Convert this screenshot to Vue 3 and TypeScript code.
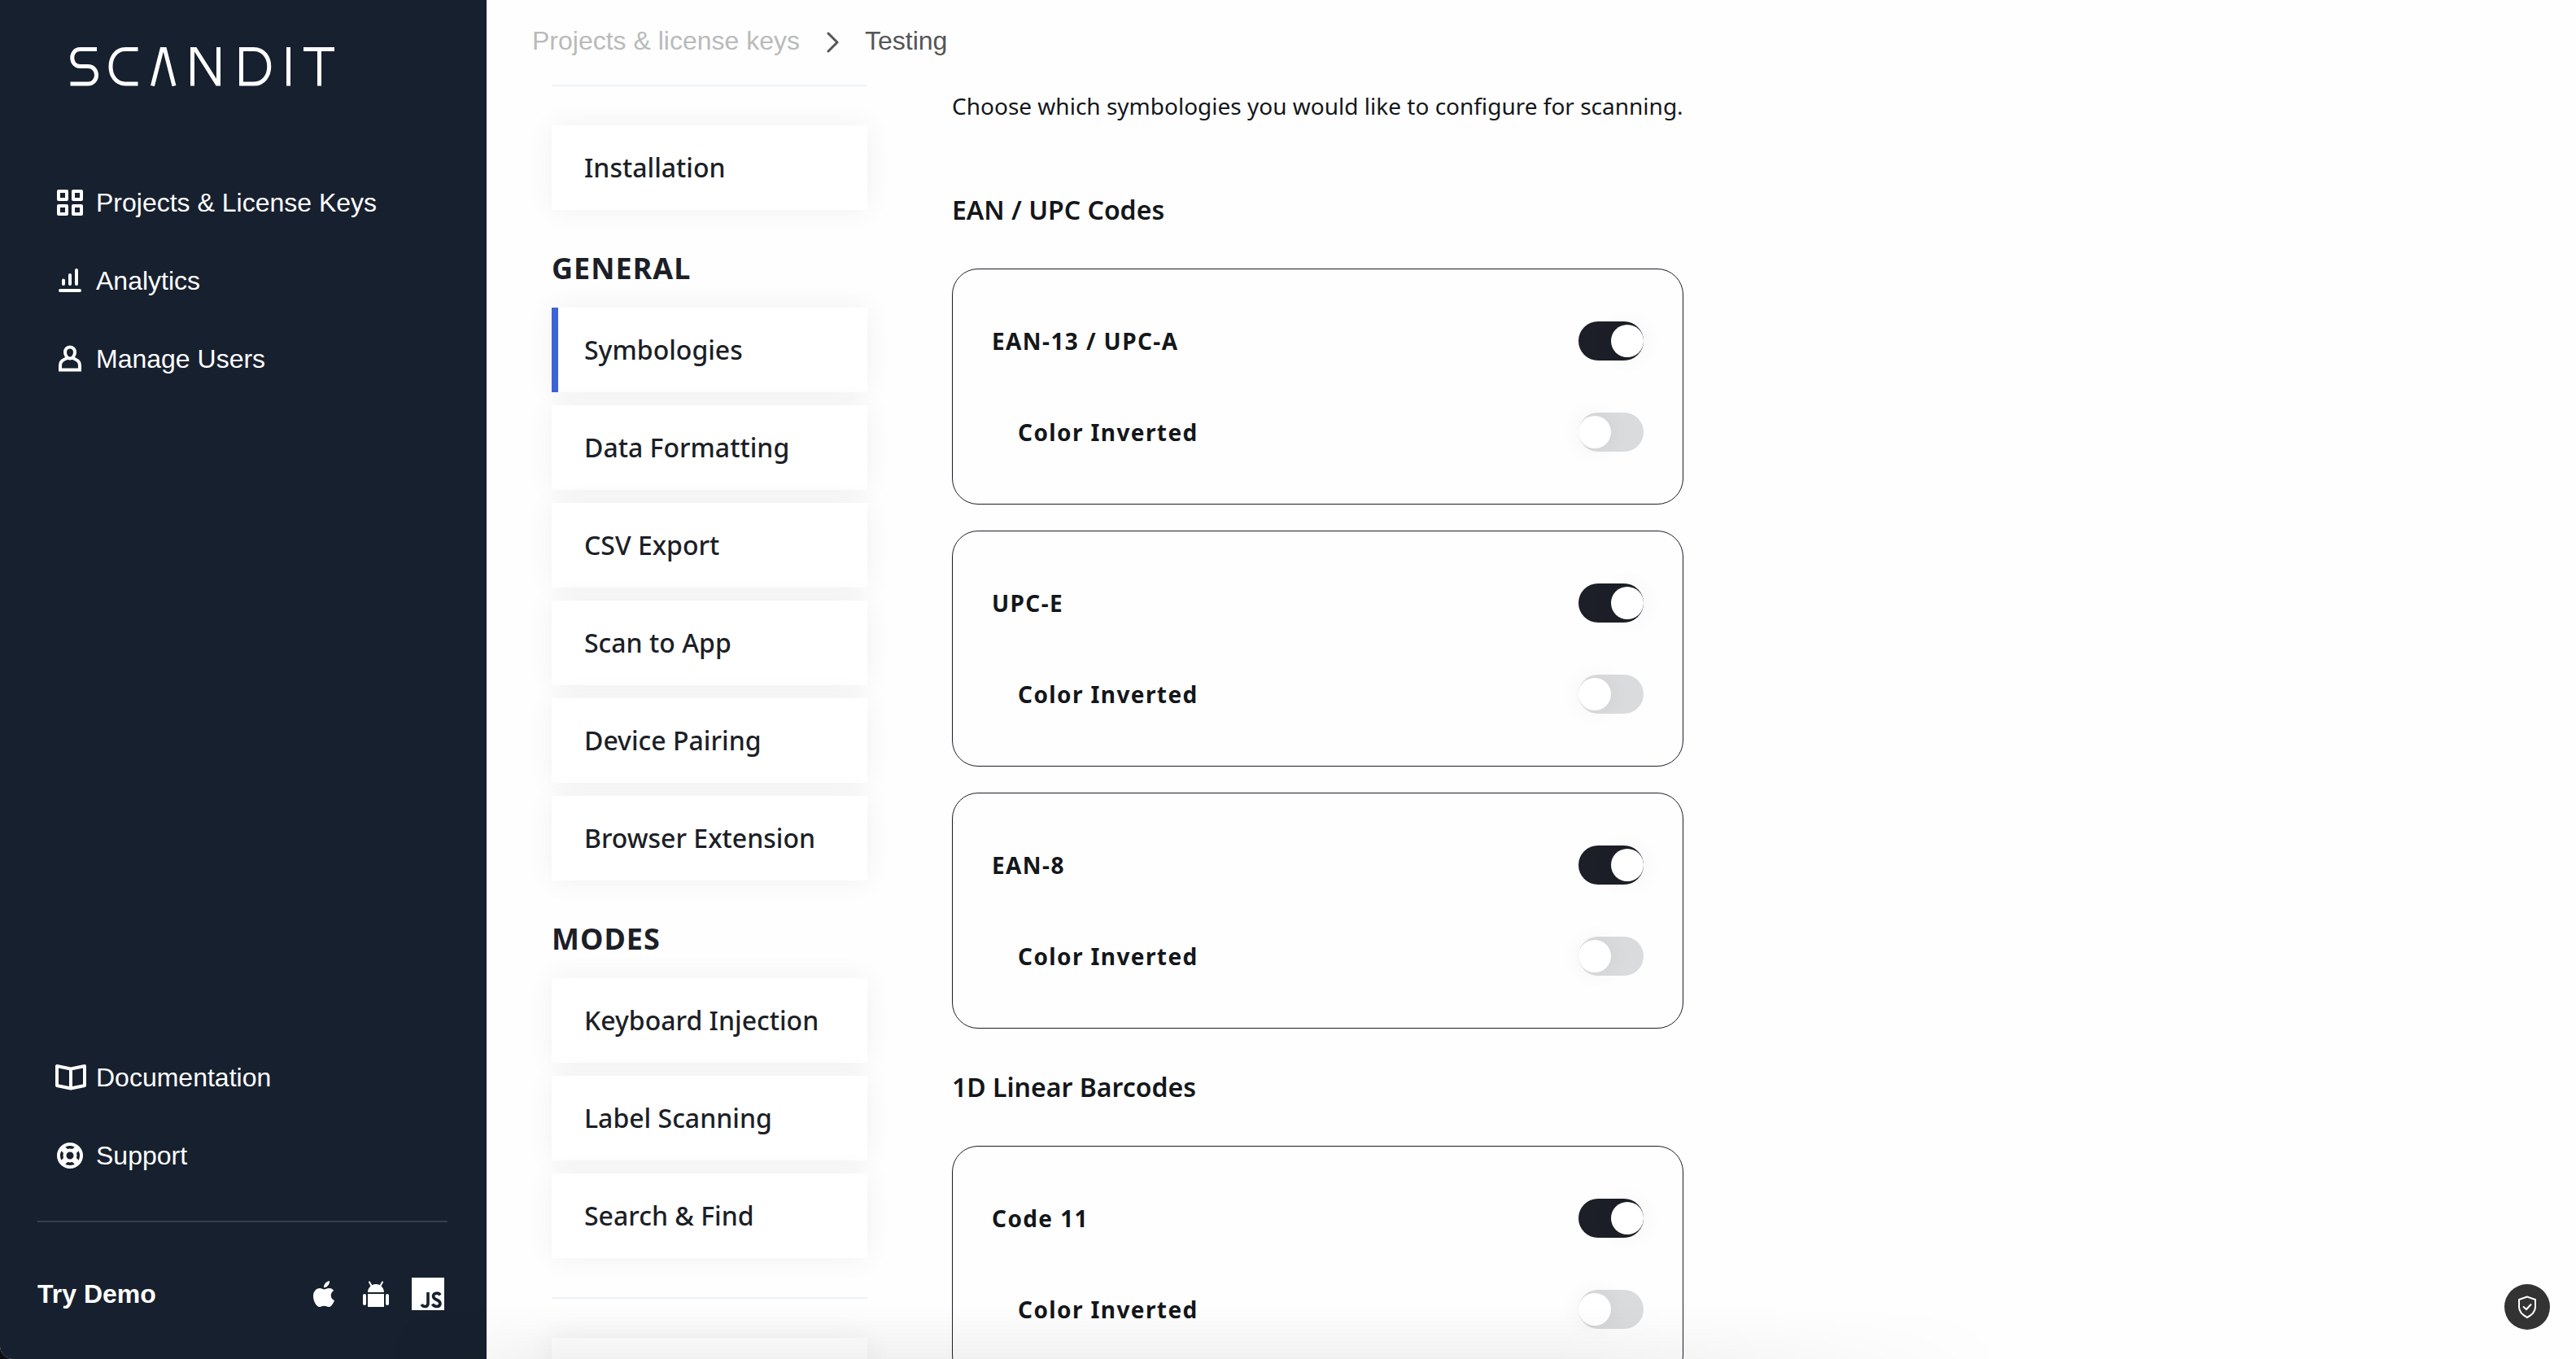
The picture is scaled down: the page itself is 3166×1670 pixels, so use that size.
<script setup lang="ts">
import { reactive } from 'vue'

interface Symbology {
  id: string
  name: string
  enabled: boolean
  inverted: boolean
}
interface SymbologyGroup {
  title: string
  items: Symbology[]
}

const general = ['Symbologies', 'Data Formatting', 'CSV Export', 'Scan to App', 'Device Pairing', 'Browser Extension']
const modes = ['Keyboard Injection', 'Label Scanning', 'Search & Find']
const active = 'Symbologies'

const groups = reactive<SymbologyGroup[]>([
  {
    title: 'EAN / UPC Codes',
    items: [
      { id: 'ean13', name: 'EAN-13 / UPC-A', enabled: true, inverted: false },
      { id: 'upce', name: 'UPC-E', enabled: true, inverted: false },
      { id: 'ean8', name: 'EAN-8', enabled: true, inverted: false },
    ],
  },
  {
    title: '1D Linear Barcodes',
    items: [{ id: 'code11', name: 'Code 11', enabled: true, inverted: false }],
  },
])
</script>

<template>
  <div class="app">
    <aside class="sidebar">
      <a href="#" class="logo" aria-label="Scandit">
        <svg width="326" height="48" viewBox="0 0 326 48" fill="none" stroke="#fff" stroke-width="5">
          <path d="M33 2.500H12.500C-.5 2.500-.5 23.500 12.500 23.500H22C36 23.500 36 45 22 45H.5" />
          <path d="M83.500 2.500H68C44 2.500 44 45 68 45H83.500" />
          <path d="M101.500 47.500L113 2.500H116.500L128 47.500" />
          <path d="M150.500 47.500V2.500H154L181 45H182.500V0" />
          <path d="M210.500 2.500H226C251 2.500 251 45 226 45H210.500Z" />
          <path d="M268.500 0V47.500" />
          <path d="M287 2.500H325M306.500 2.500V47.500" />
        </svg>
      </a>

      <nav class="nav" aria-label="Main">
        <a href="#" class="nav-item">
          <svg class="icon" viewBox="0 0 40 40" fill="none" stroke="#fff" stroke-width="4" stroke-linejoin="round">
            <path d="M6 6h10v10H6zM24 6h10v10H24zM6 24h10v10H6zM24 24h10v10H24z" />
          </svg>
          Projects &amp; License Keys
        </a>
        <a href="#" class="nav-item">
          <svg class="icon" viewBox="0 0 40 40" fill="none" stroke="#fff" stroke-width="4" stroke-linecap="round">
            <path d="M8 32H32M12 19.500V24M20 13V24M28 7V24" />
          </svg>
          Analytics
        </a>
        <a href="#" class="nav-item">
          <svg class="icon" viewBox="0 0 40 40" fill="none" stroke="#fff" stroke-width="4">
            <path d="M20 5.500c-3.800 0-6 2.800-6 6.500s2.700 7.500 6 7.500 6-3.800 6-7.500-2.200-6.500-6-6.500z" />
            <path d="M16.500 19C11 21.500 8 23 8 28V33.500H32V28C32 23 29 21.500 23.500 19" />
          </svg>
          Manage Users
        </a>
      </nav>

      <nav class="nav nav-bottom" aria-label="Help">
        <a href="#" class="nav-item">
          <svg class="icon" viewBox="0 0 40 40" fill="none" stroke="#fff" stroke-width="4" stroke-linejoin="round">
            <path d="M21 9.500L4 6V30L21 33.500L38 30V6ZM21 9.500V33.500" />
          </svg>
          Documentation
        </a>
        <a href="#" class="nav-item">
          <svg class="icon" viewBox="0 0 40 40" fill="none" stroke="#fff">
            <circle cx="20" cy="20" r="14" stroke-width="4" />
            <circle cx="20" cy="20" r="6.500" stroke-width="4" />
            <path d="M10 10l6 6M30 10l-6 6M10 30l6-6M30 30l-6-6" stroke-width="7" />
          </svg>
          Support
        </a>
      </nav>

      <footer class="demo">
        <span class="demo-label">Try Demo</span>
        <span class="demo-links">
          <a href="#" aria-label="iOS demo">
            <svg width="40" height="40" viewBox="0 0 40 40" fill="#fff">
              <path d="M27 4c.5 4-3 8.500-7 8.300C19.800 8.200 23 4.700 27 4zM20.500 14.500c1.600 0 3.300-1.700 6.300-1.500 2.300.1 4.200 1.100 5.400 2.900-5.200 3.300-4.300 9.800.8 12C31.500 32 29 36 26 36c-2.300 0-3.200-1.200-5.600-1.200-2.500 0-3.400 1.200-5.600 1.200C11 36 7 29 7 23c0-6.200 3.700-9.900 8-10 2.400 0 4 1.500 5.500 1.500z" />
            </svg>
          </a>
          <a href="#" aria-label="Android demo">
            <svg width="40" height="40" viewBox="0 0 40 40" fill="#fff">
              <path d="M10 18C10 12.500 14.500 8 20 8s10 4.500 10 10zM10 20H30V36H10z" />
              <rect x="4" y="20" width="4" height="14" rx="2" />
              <rect x="32" y="20" width="4" height="14" rx="2" />
              <path d="M12 5.500l3 5.500M28 5.500l-3 5.500" stroke="#fff" stroke-width="2" stroke-linecap="round" />
            </svg>
          </a>
          <a href="#" aria-label="JavaScript demo">
            <svg width="40" height="40" viewBox="0 0 40 40">
              <path d="M0 0H40V40H0z" fill="#fff" />
              <path d="M20 18V31.500C20 36.500 14.500 36.500 12 33M35 21.500C33 18 27 18.500 26.500 22.500C26.500 28.500 35 26 35 32C34.500 36.500 28 36.500 25.500 32.500" fill="none" stroke="#17202e" stroke-width="3.600" />
            </svg>
          </a>
        </span>
      </footer>
    </aside>

    <main class="main">
      <nav class="breadcrumb" aria-label="Breadcrumb">
        <a href="#">Projects &amp; license keys</a>
        <svg class="chevron" width="16" height="28" viewBox="0 0 16 28" fill="none" stroke="#555" stroke-width="3" stroke-linecap="round" stroke-linejoin="round">
          <path d="M3 3l11 11L3 25" />
        </svg>
        <span>Testing</span>
      </nav>

      <div class="columns">
        <nav class="settings" aria-label="Project settings">
          <hr />
          <a href="#" class="tile">Installation</a>
          <h2>GENERAL</h2>
          <div class="tiles">
            <a v-for="t in general" :key="t" href="#" class="tile" :class="{ active: t === active }">{{ t }}</a>
          </div>
          <h2>MODES</h2>
          <div class="tiles">
            <a v-for="t in modes" :key="t" href="#" class="tile">{{ t }}</a>
          </div>
          <hr class="lower" />
          <a href="#" class="tile" aria-label="More"></a>
        </nav>

        <section class="content">
          <p>Choose which symbologies you would like to configure for scanning.</p>
          <template v-for="g in groups" :key="g.title">
            <h3>{{ g.title }}</h3>
            <div class="cards">
              <div v-for="s in g.items" :key="s.id" class="card">
                <div class="row">
                  <label :for="s.id">{{ s.name }}</label>
                  <input :id="s.id" v-model="s.enabled" type="checkbox" role="switch" class="switch" />
                </div>
                <div class="row sub">
                  <label :for="s.id + '-inverted'">Color Inverted</label>
                  <input :id="s.id + '-inverted'" v-model="s.inverted" type="checkbox" role="switch" class="switch" />
                </div>
              </div>
            </div>
          </template>
        </section>
      </div>
    </main>

    <div class="fade"></div>
    <button class="privacy" type="button" aria-label="Privacy settings">
      <svg width="24" height="28" viewBox="0 0 24 28" fill="none" stroke="#fff" stroke-width="2">
        <path d="M12 1.500L2 5V14C2 20 6.500 24 12 27C17.500 24 22 20 22 14V5Z" />
        <path d="M7 13.500l4 3.500 6-6.500" />
      </svg>
    </button>
  </div>
</template>

<style>
body {
  margin: 0;
  background: #0b0d12;
}
</style>

<style scoped>
* {
  box-sizing: border-box;
}
.app {
  display: flex;
  height: 100vh;
  overflow: hidden;
  position: relative;
  background: #fefefe;
  border-bottom-left-radius: 16px;
  font-family: "Noto Sans", sans-serif;
  color: #14171a;
}
a {
  color: inherit;
  text-decoration: none;
}
.sidebar {
  flex: 0 0 598px;
  display: flex;
  flex-direction: column;
  background: #17202e;
  color: #fff;
  font-family: "Liberation Sans", Arial, sans-serif;
  font-size: 32px;
}
.logo {
  display: block;
  height: 48px;
  margin: 58px 0 95px 86px;
}
.logo svg {
  display: block;
}
.nav-item {
  display: flex;
  align-items: center;
  gap: 12px;
  height: 96px;
  padding-left: 66px;
}
.icon {
  width: 40px;
  height: 40px;
}
.nav-bottom {
  margin-top: auto;
}
.demo {
  display: flex;
  align-items: center;
  justify-content: space-between;
  height: 170px;
  margin: 32px 48px 0 46px;
  padding: 8px 4px 0 0;
  border-top: 2px solid #323e51;
}
.demo-label {
  font-weight: 700;
}
.demo-links {
  display: flex;
  gap: 24px;
}
.demo-links a,
.demo-links svg {
  display: block;
}
.main {
  flex: 1;
  min-width: 0;
}
.breadcrumb {
  display: flex;
  align-items: center;
  height: 104px;
  padding: 0 0 4px 56px;
  gap: 32px;
  font-family: "Liberation Sans", Arial, sans-serif;
  font-size: 32px;
  color: #555;
}
.chevron {
  margin-top: 4px;
}
.breadcrumb a {
  color: #bababa;
}
.columns {
  display: flex;
  align-items: flex-start;
  gap: 104px;
  padding-left: 80px;
}
.settings {
  flex: 0 0 388px;
}
hr {
  height: 2px;
  margin: 0 0 48px;
  border: 0;
  background: #edf3f8;
}
hr.lower {
  margin-top: 48px;
}
.tile {
  display: flex;
  align-items: center;
  height: 104px;
  padding: 0 0 2px 40px;
  background: #fff;
  box-shadow: 0 0 32px rgba(0, 0, 0, 0.06);
  font-size: 32px;
  font-weight: 500;
  color: #1c1f27;
}
.tile.active {
  padding-left: 32px;
  border-left: 8px solid #3d63d8;
}
.tiles {
  display: flex;
  flex-direction: column;
  gap: 16px;
}
.settings h2 {
  margin: 0;
  padding: 48px 0 24px;
  font-size: 36px;
  line-height: 48px;
  font-weight: 700;
  letter-spacing: 1px;
  color: #1c1f27;
}
.content {
  flex: 0 0 899px;
}
.content p {
  margin: 0;
  padding: 6px 0 36px;
  font-size: 28px;
  line-height: 40px;
}
.content h3 {
  margin: 0;
  font-size: 32px;
  line-height: 144px;
  font-weight: 600;
}
.card {
  display: flex;
  flex-direction: column;
  gap: 64px;
  padding: 64px 48px;
  border: 1px solid #1c1f27;
  border-radius: 32px;
}
.cards {
  display: flex;
  flex-direction: column;
  gap: 32px;
}
.row {
  display: flex;
  align-items: center;
  justify-content: space-between;
  height: 48px;
  font-size: 28px;
  font-weight: 700;
  letter-spacing: 0.05em;
}
.row.sub {
  padding-left: 32px;
}
.switch {
  appearance: none;
  display: flex;
  align-items: center;
  width: 80px;
  height: 48px;
  margin: 0;
  border-radius: 24px;
  background: #dadbdd;
}
.switch::before {
  content: "";
  width: 40px;
  height: 40px;
  border-radius: 50%;
  background: #fff;
  box-shadow: 0 0 28px rgba(0, 0, 0, 0.06);
}
.switch:checked {
  justify-content: flex-end;
  background: #1c1f27;
}
.fade {
  position: absolute;
  left: 0;
  right: 0;
  bottom: 0;
  height: 64px;
  background: linear-gradient(transparent, rgba(0, 0, 0, 0.05));
  mask-image: linear-gradient(90deg, transparent 15%, #000 22%, #000 60%, transparent 78%);
  pointer-events: none;
}
.privacy {
  position: absolute;
  right: 32px;
  bottom: 36px;
  display: grid;
  place-items: center;
  width: 56px;
  height: 56px;
  padding: 0;
  border: 0;
  border-radius: 50%;
  background: #333;
}
</style>
